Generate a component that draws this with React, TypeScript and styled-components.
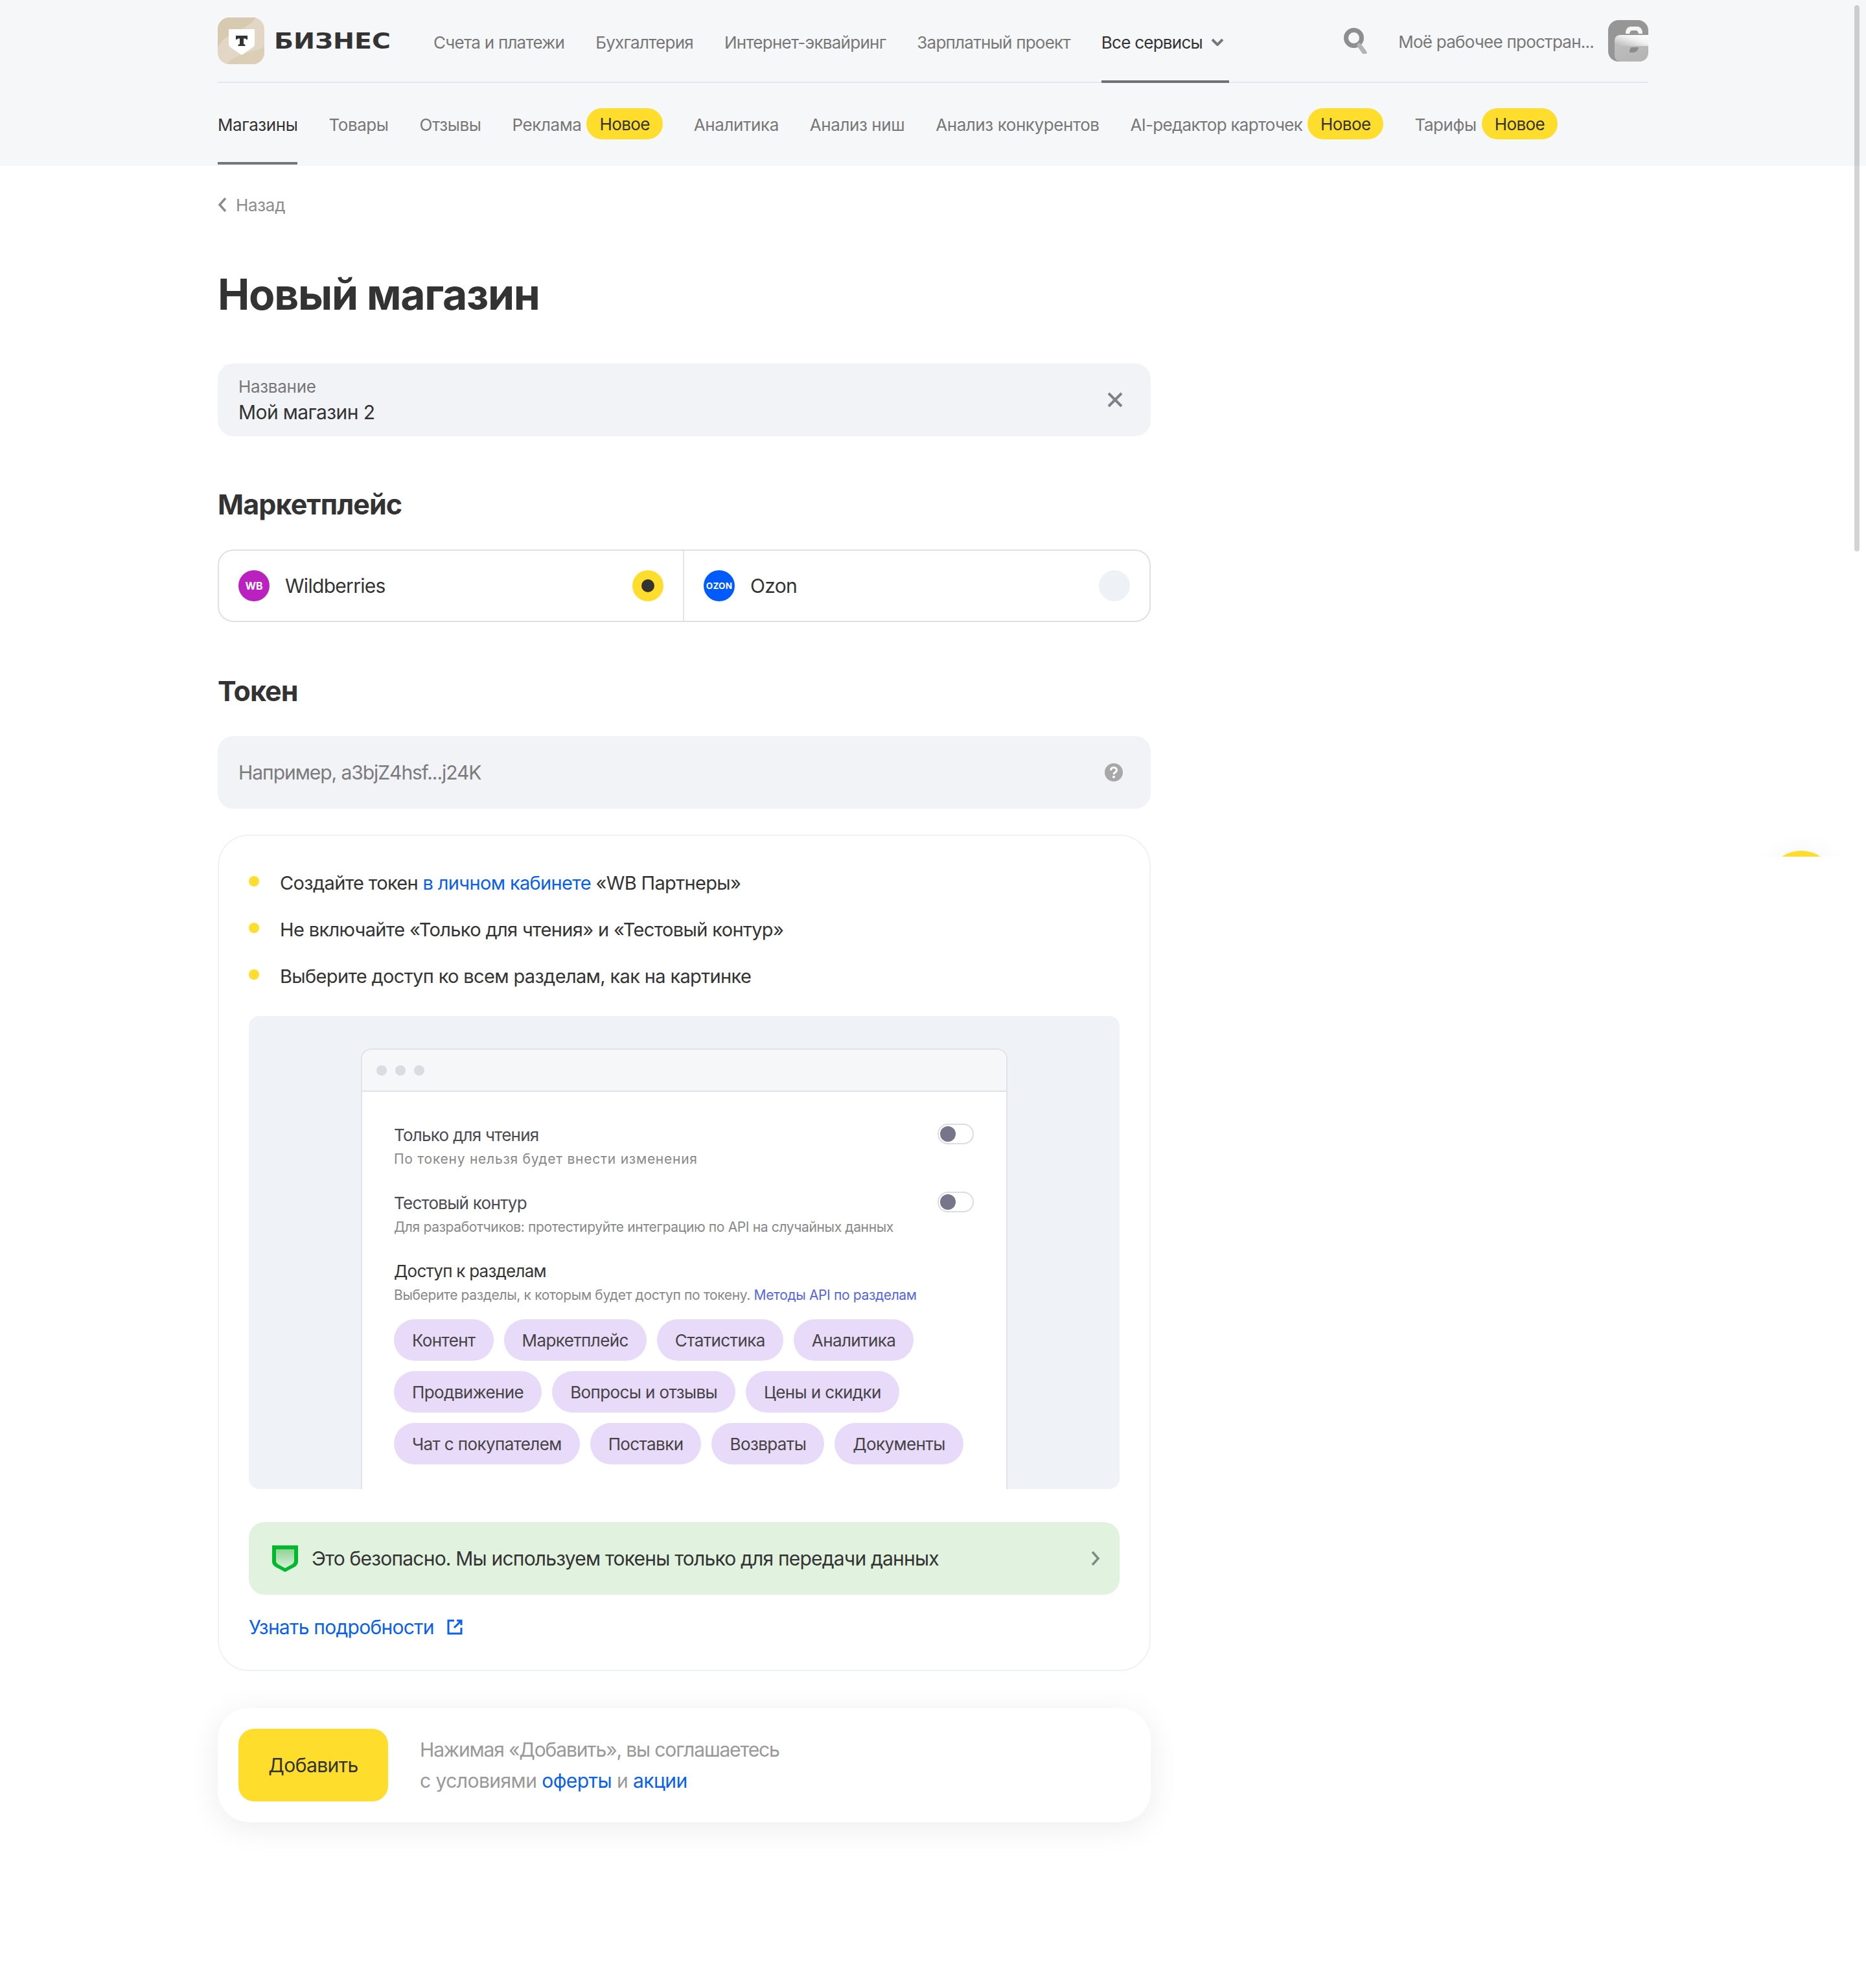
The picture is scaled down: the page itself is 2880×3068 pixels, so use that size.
import React from 'react';
import styled, { createGlobalStyle } from 'styled-components';

const GlobalStyle = createGlobalStyle`
  html, body {
    margin: 0;
    padding: 0;
    background: #fff;
  }
  body {
    font-family: Inter, "Noto Sans", sans-serif;
    color: #333;
  }
  * {
    box-sizing: border-box;
  }
`;

const Page = styled.div`
  position: relative;
  height: 3068px;
  overflow: hidden;
`;

const Header = styled.header`
  background: #f6f7f8;
  height: 256px;
  padding: 0 336px;
`;

const TopRow = styled.div`
  display: flex;
  align-items: center;
  height: 128px;
  border-bottom: 2px solid #e5e7ee;
`;

const Logo = styled.div`
  display: flex;
  align-items: center;
  gap: 15px;
  margin-right: 64px;
  height: 100%;
`;

const LogoText = styled.span`
  display: block;
  width: 182px;
  font-family: "DejaVu Sans", sans-serif;
  font-weight: 700;
  font-size: 34px;
  color: #333;
  transform: scaleX(1.16);
  transform-origin: left center;
`;

const MainNav = styled.nav`
  display: flex;
  gap: 48px;
  height: 100%;
  flex: 1;
`;

const MainItem = styled.a<{ $active?: boolean }>`
  display: flex;
  align-items: center;
  gap: 13px;
  height: 128px;
  padding-top: 6px;
  padding-right: ${p => (p.$active ? '8px' : '0')};
  font-size: 26px;
  letter-spacing: -0.75px;
  color: ${p => (p.$active ? '#333' : '#777')};
  border-bottom: 4px solid ${p => (p.$active ? '#6f7073' : 'transparent')};
`;

const Workspace = styled.div`
  display: flex;
  align-items: center;
  font-size: 26px;
  letter-spacing: -0.75px;
  color: #777;
`;

const SearchBox = styled.span`
  display: flex;
  margin-right: 48px;
`;

const WorkspaceName = styled.span`
  margin-right: 22px;
  padding-top: 2px;
`;

const SubNav = styled.nav`
  display: flex;
  gap: 48px;
  height: 126px;
`;

const SubItem = styled.a<{ $active?: boolean; $tight?: boolean }>`
  display: flex;
  align-items: center;
  gap: 8px;
  height: 126px;
  padding-top: 6px;
  font-size: 26px;
  letter-spacing: ${p => (p.$tight ? '-0.72px' : '-0.42px')};
  color: ${p => (p.$active ? '#333' : '#777')};
  border-bottom: 4px solid ${p => (p.$active ? '#777' : 'transparent')};
`;

const NewBadge = styled.span`
  display: flex;
  align-items: center;
  height: 48px;
  padding: 0 20px;
  border-radius: 24px;
  background: #ffdd2d;
  color: #333;
  font-size: 26px;
  letter-spacing: -0.6px;
  margin-top: -2px;
`;

const Main = styled.main`
  width: 1440px;
  margin-left: 336px;
`;

const Back = styled.a`
  display: flex;
  align-items: center;
  gap: 14px;
  height: 60px;
  margin-top: 30px;
  font-size: 26px;
  letter-spacing: -0.3px;
  color: #8c8c8c;
`;

const Title = styled.h1`
  margin: 72px 0 0;
  font-size: 66px;
  line-height: 72px;
  font-weight: 700;
  letter-spacing: -1.3px;
  color: #333;
`;

const Field = styled.div`
  display: flex;
  align-items: center;
  justify-content: space-between;
  height: 112px;
  padding: 0 43px 0 32px;
  border-radius: 24px;
  background: #f1f3f7;
`;

const NameField = styled(Field)`
  margin-top: 71px;
`;

const FieldText = styled.div`
  padding-top: 2px;
`;

const FieldLabel = styled.div`
  font-size: 26px;
  line-height: 34px;
  letter-spacing: -0.3px;
  color: #777;
`;

const FieldValue = styled.div`
  margin-top: 2px;
  font-size: 30px;
  line-height: 40px;
  letter-spacing: -0.6px;
  color: #333;
`;

const Placeholder = styled(FieldValue)`
  margin-top: 0;
  letter-spacing: -1.05px;
  color: #7b7b7b;
`;

const SectionTitle = styled.h2`
  margin: 0;
  font-size: 43px;
  line-height: 56px;
  font-weight: 700;
  letter-spacing: -0.9px;
  color: #333;
`;

const MarketTitle = styled(SectionTitle)`
  margin-top: 77px;
`;

const TokenTitle = styled(SectionTitle)`
  margin-top: 78px;
`;

const Segment = styled.div`
  display: grid;
  grid-template-columns: 1fr 1fr;
  height: 112px;
  margin-top: 42px;
  border: 2px solid #dde1e5;
  border-radius: 24px;
`;

const SegmentItem = styled.div<{ $first?: boolean }>`
  display: flex;
  align-items: center;
  gap: 24px;
  padding: 0 30px;
  font-size: 30px;
  letter-spacing: -0.7px;
  color: #333;
  border-right: ${p => (p.$first ? '2px solid #e3e5e8' : 'none')};
`;

const Brand = styled.span<{ $color: string }>`
  display: flex;
  align-items: center;
  justify-content: center;
  width: 48px;
  height: 48px;
  border-radius: 50%;
  background: ${p => p.$color};
  color: #fff;
  font-weight: 700;
`;

const BrandLabel = styled.span`
  font-size: 16px;
  letter-spacing: 0;
`;

const OzonLabel = styled(BrandLabel)`
  font-size: 13.5px;
  letter-spacing: 0.2px;
`;

const SegmentName = styled.span`
  flex: 1;
`;

const Radio = styled.span<{ $on?: boolean }>`
  display: flex;
  align-items: center;
  justify-content: center;
  width: 48px;
  height: 48px;
  border-radius: 50%;
  background: ${p => (p.$on ? '#ffdd2d' : '#eef1f6')};
`;

const RadioDot = styled.span`
  width: 20px;
  height: 20px;
  border-radius: 50%;
  background: #333;
`;

const TokenField = styled(Field)`
  margin-top: 42px;
`;

const Card = styled.section`
  height: 1291px;
  margin-top: 40px;
  padding: 52px 46px 0;
  border: 2px solid #eef1f5;
  border-radius: 48px;
`;

const Steps = styled.ul`
  display: flex;
  flex-direction: column;
  gap: 32px;
  margin: 0;
  padding: 0;
  list-style: none;
`;

const Step = styled.li`
  display: flex;
  align-items: center;
  gap: 32px;
  height: 40px;
  font-size: 29px;
  letter-spacing: -0.65px;
  color: #333;
`;

const Bullet = styled.span`
  width: 16px;
  height: 16px;
  border-radius: 50%;
  background: #ffdd2d;
  margin-top: -4px;
`;

const Link = styled.a`
  color: #0860f0;
`;

const Illustration = styled.div`
  height: 730px;
  margin-top: 42px;
  padding: 50px 173px 0;
  border-radius: 16px;
  background: #eff3f8;
  overflow: hidden;
`;

const Window = styled.div`
  height: 680px;
  background: #fff;
  border: 2px solid #dfe3e8;
  border-bottom: none;
  border-radius: 16px 16px 0 0;
`;

const WindowBar = styled.div`
  display: flex;
  align-items: center;
  gap: 13px;
  height: 65px;
  padding: 0 22px;
  background: #f6f7f9;
  border-bottom: 2px solid #dfe3e8;
  border-radius: 14px 14px 0 0;
`;

const WindowDot = styled.span`
  width: 16px;
  height: 16px;
  border-radius: 50%;
  background: #d9dce0;
`;

const WindowBody = styled.div`
  padding: 49px 50px 0 49px;
`;

const Setting = styled.div`
  display: flex;
  justify-content: space-between;
  align-items: flex-start;
  height: 105px;
`;

const SettingTitle = styled.div<{ $dark?: boolean }>`
  font-size: 26px;
  line-height: 36px;
  letter-spacing: -0.75px;
  color: ${p => (p.$dark ? '#333' : '#4a4a52')};
`;

const SettingHint = styled.div<{ $wide?: boolean }>`
  margin-top: 4px;
  font-size: 21px;
  line-height: 30px;
  letter-spacing: ${p => (p.$wide ? '0.75px' : '-0.35px')};
  color: #888;
`;

const HintLink = styled.span`
  color: #5566dd;
`;

const Toggle = styled.span`
  display: flex;
  align-items: center;
  width: 56px;
  height: 32px;
  padding-left: 2px;
  border: 2px solid #dadce0;
  border-radius: 16px;
`;

const Knob = styled.span`
  width: 24px;
  height: 24px;
  border-radius: 50%;
  background: #77758a;
`;

const Chips = styled.div`
  display: flex;
  flex-wrap: wrap;
  gap: 16px;
  margin-top: 22px;
  width: 920px;
`;

const Chip = styled.span`
  display: flex;
  align-items: center;
  height: 64px;
  padding: 0 28px;
  border-radius: 32px;
  background: #e8daf9;
  font-size: 26px;
  letter-spacing: -0.6px;
  color: #444;
`;

const SafeBanner = styled.div`
  display: flex;
  align-items: center;
  gap: 21px;
  height: 112px;
  margin-top: 51px;
  padding: 0 30px 0 36px;
  border-radius: 24px;
  background: #e1f2df;
  font-size: 30px;
  letter-spacing: -0.8px;
  color: #333;
`;

const SafeText = styled.span`
  flex: 1;
`;

const MoreLink = styled.a`
  display: flex;
  align-items: center;
  gap: 20px;
  margin-top: 30px;
  height: 40px;
  font-size: 30px;
  letter-spacing: -0.75px;
  color: #0860f0;
`;

const Footer = styled.div`
  display: flex;
  align-items: center;
  gap: 49px;
  height: 176px;
  margin-top: 57px;
  padding: 0 32px;
  border-radius: 48px;
  background: #fff;
  box-shadow: 0 8px 48px rgba(0, 0, 0, 0.08);
`;

const AddButton = styled.button`
  width: 231px;
  height: 112px;
  border: none;
  border-radius: 24px;
  background: #ffdd2d;
  color: #333;
  font-family: inherit;
  font-size: 30px;
  letter-spacing: -0.6px;
`;

const Terms = styled.div`
  font-size: 30px;
  line-height: 48px;
  color: #999;
`;

const TermsLine = styled.div<{ $tight?: boolean }>`
  letter-spacing: ${p => (p.$tight ? '-1.15px' : '-0.55px')};
`;

const FloatingClip = styled.div`
  position: absolute;
  left: 2660px;
  top: 1270px;
  width: 220px;
  height: 52px;
  overflow: hidden;
`;

const FloatingDot = styled.div`
  position: absolute;
  left: 66px;
  top: 43px;
  width: 108px;
  height: 108px;
  border-radius: 50%;
  background: #ffdd2d;
  box-shadow: 0 0 40px rgba(0, 0, 0, 0.05);
`;

const Scrollbar = styled.div`
  position: absolute;
  left: 2862px;
  top: 8px;
  width: 8px;
  height: 843px;
  border-radius: 4px;
  background: rgba(0, 0, 0, 0.17);
`;

const ChevronDown = () => (
  <svg width="20" height="12" viewBox="0 0 20 12" fill="none">
    <path d="M2 2l8 8 8-8" stroke="#777" strokeWidth="4" />
  </svg>
);

const LogoMark = () => (
  <svg width="72" height="72" viewBox="0 0 72 72">
    <rect width="72" height="72" rx="18" fill="#e2d6c4" />
    <path d="M18 0h41C50 14 30 20 12 32 6 36 2 42 0 46V18C0 8 8 0 18 0z" fill="#d8c9b1" />
    <path d="M14 72c10-12 26-16 40-20 8-2 14-4 18-8v10c0 10-8 18-18 18z" fill="#dccdb6" />
    <path d="M17 18h40v22c0 3-1 5-4 7L37 58 21 47c-3-2-4-4-4-7z" fill="#fff" />
    <path d="M28 28h18v6h-1.500c-1-1-1.500-1.500-3-1.500H40V41l2.500 1v2h-11v-2l2.500-1v-8.500h-1.500c-1.500 0-2 .5-3 1.500H28z" fill="#333" />
  </svg>
);

const SearchIcon = () => (
  <svg width="36" height="40" viewBox="0 0 36 40" fill="none">
    <circle cx="15.500" cy="15.500" r="12" stroke="#8e8e8e" strokeWidth="7" />
    <path d="M24 27l8 11" stroke="#b4b4b4" strokeWidth="7" strokeLinecap="round" />
  </svg>
);

const Avatar = () => (
  <svg width="62" height="64" viewBox="0 0 62 64">
    <defs>
      <linearGradient id="caseTop" x1="0" y1="1" x2="1" y2="0">
        <stop offset="0" stopColor="#b5b5b5" />
        <stop offset="0.6" stopColor="#f2f2f2" />
        <stop offset="1" stopColor="#ffffff" />
      </linearGradient>
      <linearGradient id="caseBottom" x1="0" y1="0" x2="1" y2="1">
        <stop offset="0" stopColor="#bdbdbd" />
        <stop offset="1" stopColor="#b3b3b3" />
      </linearGradient>
    </defs>
    <rect width="62" height="64" rx="16" fill="#969696" />
    <path d="M27 21c0-7 3-11 8-11h10c5 0 8 4 8 11h-6c-1-4-2-5-5-5h-4c-3 0-4 1-5 5z" fill="#f6f6f6" />
    <path d="M10 32c0-6 4-9 9-9h43v17H10z" fill="url(#caseTop)" />
    <path d="M10 40h52v10c0 8-6 14-14 14H19c-5 0-9-4-9-9z" fill="url(#caseBottom)" />
    <path d="M37 42h10c-1 5-4 8-8 8h-6c0-4 1-8 4-8z" fill="#8b8b8b" />
  </svg>
);

const BackChevron = () => (
  <svg width="14" height="24" viewBox="0 0 14 24" fill="none">
    <path d="M12 2L3 12l9 10" stroke="#8c8c8c" strokeWidth="3.500" />
  </svg>
);

const CloseIcon = () => (
  <svg width="24" height="24" viewBox="0 0 24 24" fill="none">
    <path d="M2 2l20 20M22 2L2 22" stroke="#7c8287" strokeWidth="4" />
  </svg>
);

const HelpIcon = () => (
  <svg width="28" height="28" viewBox="0 0 28 28" fill="none">
    <circle cx="14" cy="14" r="14" fill="#a8a8a8" />
    <path d="M9.500 11c0-3 2-4.500 4.500-4.500s4.500 1.500 4.500 4c0 3.500-4.500 3.500-4.500 6.500" stroke="#fff" strokeWidth="3" />
    <circle cx="14" cy="21" r="2" fill="#fff" />
  </svg>
);

const ShieldIcon = () => (
  <svg width="40" height="41" viewBox="0 0 40 41">
    <defs>
      <linearGradient id="shieldFill" x1="0" y1="0" x2="0" y2="1">
        <stop offset="0" stopColor="#8fd395" />
        <stop offset="1" stopColor="#dbf0da" />
      </linearGradient>
    </defs>
    <path d="M0 0h40v24c0 4-1 6-5 9L20 41 5 33c-4-3-5-5-5-9z" fill="#00b92d" />
    <path d="M6 6h28v18c0 2-1 3-3 5L20 35 9 29c-2-2-3-3-3-5z" fill="url(#shieldFill)" />
  </svg>
);

const ChevronRight = () => (
  <svg width="14" height="24" viewBox="0 0 14 24" fill="none">
    <path d="M2 2l9 10-9 10" stroke="#7f8a80" strokeWidth="3.500" />
  </svg>
);

const ExternalIcon = () => (
  <svg width="24" height="24" viewBox="0 0 24 24" fill="none">
    <path d="M11 2H2v20h20v-9" stroke="#0860f0" strokeWidth="3" />
    <path d="M15 2h7v7M22 2L11 13" stroke="#0860f0" strokeWidth="3" />
  </svg>
);

const topLinks = ['Счета и платежи', 'Бухгалтерия', 'Интернет-эквайринг', 'Зарплатный проект'];

const subLinks = [
  { label: 'Магазины', active: true },
  { label: 'Товары' },
  { label: 'Отзывы' },
  { label: 'Реклама', badge: true },
  { label: 'Аналитика' },
  { label: 'Анализ ниш' },
  { label: 'Анализ конкурентов' },
  { label: 'AI-редактор карточек', badge: true, tight: true },
  { label: 'Тарифы', badge: true },
];

const chips = [
  'Контент',
  'Маркетплейс',
  'Статистика',
  'Аналитика',
  'Продвижение',
  'Вопросы и отзывы',
  'Цены и скидки',
  'Чат с покупателем',
  'Поставки',
  'Возвраты',
  'Документы',
];

const App = () => {
  return (
    <Page>
      <GlobalStyle />
      <Header>
        <TopRow>
          <Logo>
            <LogoMark />
            <LogoText>БИЗНЕС</LogoText>
          </Logo>
          <MainNav>
            {topLinks.map(link => (
              <MainItem key={link}>{link}</MainItem>
            ))}
            <MainItem $active>
              Все сервисы
              <ChevronDown />
            </MainItem>
          </MainNav>
          <Workspace>
            <SearchBox>
              <SearchIcon />
            </SearchBox>
            <WorkspaceName>Моё рабочее простран...</WorkspaceName>
            <Avatar />
          </Workspace>
        </TopRow>
        <SubNav>
          {subLinks.map(item => (
            <SubItem key={item.label} $active={item.active} $tight={item.tight}>
              {item.label}
              {item.badge && <NewBadge>Новое</NewBadge>}
            </SubItem>
          ))}
        </SubNav>
      </Header>

      <Main>
        <Back>
          <BackChevron />
          Назад
        </Back>
        <Title>Новый магазин</Title>

        <NameField>
          <FieldText>
            <FieldLabel>Название</FieldLabel>
            <FieldValue>Мой магазин 2</FieldValue>
          </FieldText>
          <CloseIcon />
        </NameField>

        <MarketTitle>Маркетплейс</MarketTitle>
        <Segment>
          <SegmentItem $first>
            <Brand $color="#bb20c0">
              <BrandLabel>WB</BrandLabel>
            </Brand>
            <SegmentName>Wildberries</SegmentName>
            <Radio $on>
              <RadioDot />
            </Radio>
          </SegmentItem>
          <SegmentItem>
            <Brand $color="#005bff">
              <OzonLabel>OZON</OzonLabel>
            </Brand>
            <SegmentName>Ozon</SegmentName>
            <Radio />
          </SegmentItem>
        </Segment>

        <TokenTitle>Токен</TokenTitle>
        <TokenField>
          <Placeholder>Например, a3bjZ4hsf...j24K</Placeholder>
          <HelpIcon />
        </TokenField>

        <Card>
          <Steps>
            <Step>
              <Bullet />
              <span>
                Создайте токен <Link>в личном кабинете</Link> «WB Партнеры»
              </span>
            </Step>
            <Step>
              <Bullet />
              Не включайте «Только для чтения» и «Тестовый контур»
            </Step>
            <Step>
              <Bullet />
              Выберите доступ ко всем разделам, как на картинке
            </Step>
          </Steps>

          <Illustration>
            <Window>
              <WindowBar>
                <WindowDot />
                <WindowDot />
                <WindowDot />
              </WindowBar>
              <WindowBody>
                <Setting>
                  <div>
                    <SettingTitle>Только для чтения</SettingTitle>
                    <SettingHint $wide>По токену нельзя будет внести изменения</SettingHint>
                  </div>
                  <Toggle>
                    <Knob />
                  </Toggle>
                </Setting>
                <Setting>
                  <div>
                    <SettingTitle>Тестовый контур</SettingTitle>
                    <SettingHint>Для разработчиков: протестируйте интеграцию по API на случайных данных</SettingHint>
                  </div>
                  <Toggle>
                    <Knob />
                  </Toggle>
                </Setting>
                <SettingTitle $dark>Доступ к разделам</SettingTitle>
                <SettingHint>
                  Выберите разделы, к которым будет доступ по токену. <HintLink>Методы API по разделам</HintLink>
                </SettingHint>
                <Chips>
                  {chips.map(chip => (
                    <Chip key={chip}>{chip}</Chip>
                  ))}
                </Chips>
              </WindowBody>
            </Window>
          </Illustration>

          <SafeBanner>
            <ShieldIcon />
            <SafeText>Это безопасно. Мы используем токены только для передачи данных</SafeText>
            <ChevronRight />
          </SafeBanner>

          <MoreLink>
            Узнать подробности
            <ExternalIcon />
          </MoreLink>
        </Card>

        <Footer>
          <AddButton>Добавить</AddButton>
          <Terms>
            <TermsLine $tight>Нажимая «Добавить», вы соглашаетесь</TermsLine>
            <TermsLine>
              с условиями <Link>оферты</Link> и <Link>акции</Link>
            </TermsLine>
          </Terms>
        </Footer>
      </Main>

      <FloatingClip>
        <FloatingDot />
      </FloatingClip>
      <Scrollbar />
    </Page>
  );
};

export default App;
